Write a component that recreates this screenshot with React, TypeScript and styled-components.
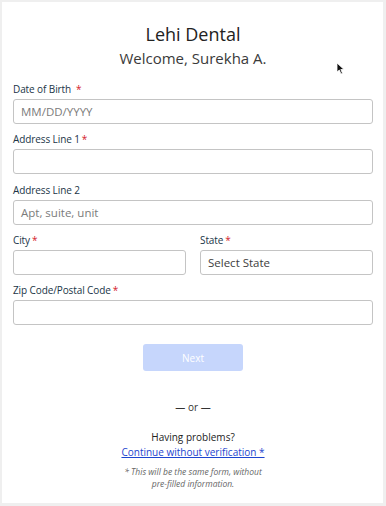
import React from "react";
import styled, { createGlobalStyle } from "styled-components";

const Global = createGlobalStyle`
  html, body { margin: 0; padding: 0; background: #efefef; }
  body { font-family: "Open Sans", "Noto Sans", sans-serif; }
  * { box-sizing: border-box; }
`;

const Page = styled.div`
  width: 386px;
  height: 506px;
  padding: 2px 3px 3px 2px;
  background: #efefef;
`;

const Card = styled.div`
  position: relative;
  height: 501px;
  background: #ffffff;
  padding: 19px 10px 0 11px;
  display: flex;
  flex-direction: column;
`;

const Header = styled.div`
  display: flex;
  flex-direction: column;
  align-items: center;
  margin-bottom: 13px;
`;

const Title = styled.div`
  font-size: 18px;
  line-height: 26px;
  color: #222;
`;

const Subtitle = styled.div`
  font-size: 15px;
  line-height: 22px;
  color: #3a3a3a;
`;

const Form = styled.div`
  display: flex;
  flex-direction: column;
  gap: 8.25px;
`;

const Row = styled.div`
  display: grid;
  grid-template-columns: 1fr 1fr;
  column-gap: 14px;
`;

const Field = styled.div`
  display: flex;
  flex-direction: column;
`;

const Label = styled.label`
  font-size: 10px;
  letter-spacing: -0.1px;
  line-height: 14px;
  color: #213547;
  margin-bottom: 3px;
`;

const Req = styled.span<{ $gap?: boolean }>`
  color: #d4202a;
  margin-left: ${(p) => (p.$gap ? "5px" : "2px")};
`;

const Input = styled.div<{ $dark?: boolean }>`
  height: 25px;
  border: 1px solid #c4c4c4;
  border-radius: 3px;
  padding: 0 7px;
  display: flex;
  align-items: center;
  font-size: 11.5px;
  color: ${(p) => (p.$dark ? "#3d3d3d" : "#7b7b7b")};
`;

const Button = styled.button`
  align-self: center;
  margin-top: 19px;
  width: 100px;
  height: 27px;
  border: none;
  border-radius: 3px;
  background: #c6d6fc;
  color: #ffffff;
  font-family: "Open Sans", sans-serif;
  font-size: 10px;
`;

const Or = styled.div`
  text-align: center;
  margin-top: 28px;
  font-size: 10px;
  line-height: 16px;
  color: #333;
`;

const Help = styled.div`
  margin-top: 14.5px;
  display: flex;
  flex-direction: column;
  align-items: center;
  font-size: 10px;
  line-height: 15px;
  color: #222;
`;

const Link = styled.a`
  color: #1d45cf;
  text-decoration: underline;
`;

const Note = styled.div`
  margin-top: 6.5px;
  text-align: center;
  font-size: 8.5px;
  line-height: 12px;
  font-style: italic;
  color: #666;
`;

const Cursor = styled.svg`
  position: absolute;
  left: 334px;
  top: 60px;
`;

export default function App() {
  return (
    <>
      <Global />
      <Page>
        <Card>
          <Header>
            <Title>Lehi Dental</Title>
            <Subtitle>Welcome, Surekha A.</Subtitle>
          </Header>
          <Form>
            <Field>
              <Label>
                Date of Birth<Req $gap>*</Req>
              </Label>
              <Input>MM/DD/YYYY</Input>
            </Field>
            <Field>
              <Label>
                Address Line 1<Req>*</Req>
              </Label>
              <Input />
            </Field>
            <Field>
              <Label>Address Line 2</Label>
              <Input>Apt, suite, unit</Input>
            </Field>
            <Row>
              <Field>
                <Label>
                  City<Req>*</Req>
                </Label>
                <Input />
              </Field>
              <Field>
                <Label>
                  State<Req>*</Req>
                </Label>
                <Input $dark>Select State</Input>
              </Field>
            </Row>
            <Field>
              <Label>
                Zip Code/Postal Code<Req>*</Req>
              </Label>
              <Input />
            </Field>
          </Form>
          <Button>Next</Button>
          <Or>— or —</Or>
          <Help>
            <span>Having problems?</span>
            <Link href="#">Continue without verification *</Link>
          </Help>
          <Note>
            * This will be the same form, without
            <br />
            pre-filled information.
          </Note>
          <Cursor width="9" height="13" viewBox="0 0 9 13">
            <path d="M1 1 L1 10 L3.3 8 L5 12 L6.5 11.3 L4.8 7.5 L8 7.5 Z" fill="#111" stroke="#fff" strokeWidth="0.8" />
          </Cursor>
        </Card>
      </Page>
    </>
  );
}
